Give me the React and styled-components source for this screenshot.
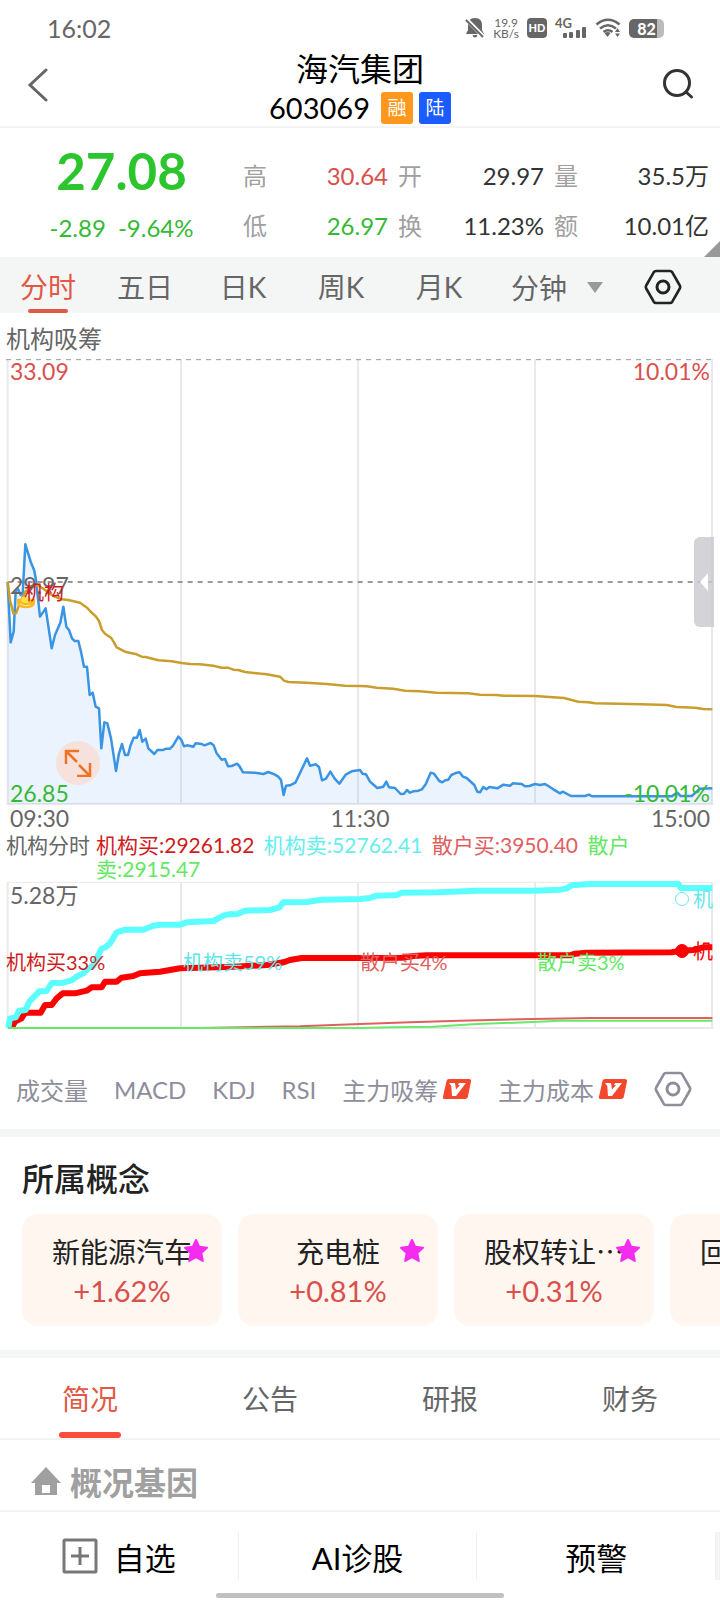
import React, { useState } from "react";
import styled, { createGlobalStyle } from "styled-components";

const stats = [
  { label: "高", value: "30.64", color: "#d9504c" },
  { label: "开", value: "29.97" },
  { label: "量", value: "35.5万" },
  { label: "低", value: "26.97", color: "#36b936" },
  { label: "换", value: "11.23%" },
  { label: "额", value: "10.01亿" },
];

const periods = ["分时", "五日", "日K", "周K", "月K"];

const indicators = [
  { name: "成交量" },
  { name: "MACD" },
  { name: "KDJ" },
  { name: "RSI" },
  { name: "主力吸筹", vip: true },
  { name: "主力成本", vip: true },
];

const concepts = [
  { name: "新能源汽车", change: "+1.62%" },
  { name: "充电桩", change: "+0.81%" },
  { name: "股权转让⋯", change: "+0.31%" },
  { name: "回购增持⋯" },
];

const infoTabs = ["简况", "公告", "研报", "财务"];

// chart series, three units per pixel
const price =
  "23,675 32,856 41,824 47,704 53,694 62,714 68,711 76,562 92,614 103,641 108,669 120,779 137,754 155,874 165,834 181,797 190,749 199,809 207,819 216,844 224,852 235,852 243,884 252,929 261,929 269,1014 278,1007 287,1049 297,1054 304,1174 313,1096 322,1099 333,1144 348,1242 357,1189 366,1161 375,1194 384,1194 392,1164 401,1142 411,1142 419,1119 427,1154 437,1145 445,1174 463,1191 472,1179 490,1179 498,1175 510,1175 519,1166 535,1139 543,1147 552,1168 561,1165 580,1169 587,1159 605,1161 613,1165 632,1158 641,1165 650,1189 665,1208 675,1206 684,1228 695,1227 711,1220 718,1227 729,1246 765,1247 790,1251 805,1245 825,1253 835,1259 843,1269 851,1314 858,1286 870,1285 886,1277 921,1204 930,1226 947,1222 957,1230 966,1270 978,1265 991,1244 1004,1265 1018,1280 1037,1253 1055,1243 1080,1239 1088,1250 1098,1252 1110,1274 1132,1293 1150,1289 1159,1274 1167,1291 1185,1293 1202,1311 1212,1310 1221,1299 1229,1307 1240,1303 1255,1301 1266,1297 1277,1282 1292,1247 1302,1250 1318,1272 1327,1276 1336,1270 1345,1268 1354,1254 1370,1247 1379,1246 1389,1259 1400,1263 1423,1284 1432,1304 1440,1306 1450,1290 1459,1297 1468,1290 1492,1294 1510,1283 1530,1286 1539,1279 1565,1281 1575,1288 1588,1287 1605,1281 1620,1284 1635,1281 1645,1287 1660,1297 1680,1309 1688,1304 1713,1317 1755,1317 1767,1313 1777,1318 2015,1318 2032,1307 2042,1317 2075,1317 2100,1295 2137,1294";
const average =
  "23,675 30,729 40,769 48,769 60,737 76,704 95,689 115,685 135,699 160,717 185,727 205,729 240,737 262,753 270,762 288,779 297,792 306,819 315,830 333,842 342,856 350,871 375,884 410,892 425,899 437,900 475,910 515,913 545,918 570,921 600,922 640,926 665,932 683,932 700,938 715,939 735,945 800,952 840,959 852,971 865,975 920,977 980,981 1035,986 1080,987 1100,988 1130,992 1180,995 1215,1001 1260,1003 1310,1007 1405,1009 1440,1013 1490,1014 1510,1016 1605,1017 1660,1021 1692,1023 1735,1034 1765,1036 1785,1039 1925,1042 2000,1044 2030,1050 2085,1052 2110,1056 2137,1057";
const bigSell =
  "25,441 30,412 47,409 57,389 77,387 88,362 118,331 140,330 155,306 190,305 215,298 230,287 250,277 265,262 280,254 295,222 305,203 315,199 330,187 350,154 375,146 430,146 460,134 480,131 540,131 560,124 640,120 670,104 685,100 710,100 735,89 810,87 838,79 850,64 920,63 965,56 1080,54 1110,51 1130,44 1190,42 1205,35 1315,34 1430,29 1600,29 1680,26 1700,22 1715,13 1770,9 2035,9 2042,21 2137,21";
const bigBuy =
  "35,441 45,422 65,412 75,395 122,395 135,372 155,372 170,352 188,337 225,337 260,329 275,319 305,319 315,302 350,302 365,290 400,285 420,277 480,272 540,262 600,260 700,257 800,252 850,244 870,237 905,231 1080,231 1210,230 1240,225 1280,223 1710,223 1725,218 1760,215 2015,214 2045,209 2080,207 2110,199 2137,199";
const smallBuy =
  "25,441 600,441 900,436 1080,429 1230,424 1380,419 1600,414 1770,411 2137,411";
const smallSell =
  "25,441 1080,441 1180,439 1300,437 1430,429 1600,423 1680,419 2137,419";

const Hexagon = () => (
  <svg width="38" height="38" viewBox="0 0 38 38" fill="none" stroke="currentColor">
    <path
      d="M12 3h14q1.500 0 2.300 1.300l7.500 13.200q.8 1.500 0 3l-7.500 13.200Q27.500 35 26 35H12q-1.500 0-2.300-1.300L2.200 20.500q-.8-1.500 0-3L9.700 4.300Q10.500 3 12 3z"
      strokeWidth="2.600"
    />
    <circle cx="19" cy="19" r="6" strokeWidth="3" />
  </svg>
);

const VipBadge = () => (
  <svg width="30" height="22" viewBox="0 0 30 22">
    <path d="M7 1h20q2.500 0 2 2.500L25.800 19q-.5 2-2.800 2H2.500Q.3 21 1 18.500L4.500 3Q5 1 7 1z" fill="#f4482c" />
    <path d="M7 5h6l1 6.500L18 7h-2l1-2h7L14 18h-4L9.300 8z" fill="#fff" />
  </svg>
);

const Star = () => (
  <StyledStar width="26" height="25" viewBox="0 0 26 25">
    <path
      d="M13 2l3.200 6.800 7.800 1-5.700 5.200 1.500 8L13 19.200 6.200 23l1.500-8L2 9.800l7.800-1z"
      fill="#f32cf0"
      stroke="#f32cf0"
      strokeWidth="2"
      strokeLinejoin="round"
    />
  </StyledStar>
);

const StatusBar = () => (
  <StyledStatus>
    <span>16:02</span>
    <StyledStatusIcons>
      <svg width="20" height="22" viewBox="0 0 20 22">
        <path d="M10 1c5 0 7 3 7 7v5l2 4H1l2-4V8c0-4 2-7 7-7zM7.500 18h5q-.5 2.500-2.500 2.500T7.500 18z" fill="#666" />
        <path d="M0 1l19 19" stroke="#fff" strokeWidth="4" />
        <path d="M1 3l17 17" stroke="#666" strokeWidth="2" />
      </svg>
      <StyledSpeed>
        <span>19.9</span>
        <span>KB/s</span>
      </StyledSpeed>
      <StyledHd>HD</StyledHd>
      <StyledSignal>
        <b>4G</b>
        <svg width="25" height="13" viewBox="0 0 25 13" fill="#666">
          <rect x="1" y="7" width="4" height="5" rx="1" />
          <rect x="7" y="6" width="4" height="6" rx="1" />
          <rect x="14" y="4" width="4" height="8" rx="1" />
          <rect x="20" y="1" width="4" height="11" rx="1" />
        </svg>
      </StyledSignal>
      <svg width="26" height="22" viewBox="0 0 26 22" fill="none" stroke="#666" strokeWidth="2.600">
        <path d="M1.500 7.500q11.500-9.500 23 0M5 11.500q8-6.500 16 0" />
        <path d="M8.500 15q4.500-3.500 9 0" />
        <path d="M9.500 16q3.500-2 6 0L12.500 20z" fill="#666" stroke="none" />
        <path d="M22.500 11l2.500 4h-5zM22.500 20l2.500-3.500h-5z" fill="#666" stroke="none" />
      </svg>
      <StyledBattery>82</StyledBattery>
    </StyledStatusIcons>
  </StyledStatus>
);

const Header = () => (
  <StyledHeader>
    <StyledIconButton aria-label="返回">
      <svg width="24" height="34" viewBox="0 0 24 34" fill="none" stroke="#666" strokeWidth="3">
        <path d="M20 2L4 17l16 15" strokeLinecap="round" />
      </svg>
    </StyledIconButton>
    <div>
      <StyledName>海汽集团</StyledName>
      <StyledCode>
        603069
        <StyledTags>
          <StyledTag $color="#ff971c">融</StyledTag>
          <StyledTag $color="#1a5cff">陆</StyledTag>
        </StyledTags>
      </StyledCode>
    </div>
    <StyledIconButton aria-label="搜索" $end>
      <svg width="32" height="32" viewBox="0 0 32 32" fill="none" stroke="#333" strokeWidth="3">
        <circle cx="15" cy="15" r="12.500" />
        <path d="M24 24l5.500 5" strokeLinecap="round" />
      </svg>
    </StyledIconButton>
  </StyledHeader>
);

const Quote = () => (
  <StyledQuote>
    <StyledPriceBlock>
      <StyledPrice>27.08</StyledPrice>
      <StyledChange>
        <span>-2.89</span>
        <span>-9.64%</span>
      </StyledChange>
    </StyledPriceBlock>
    <StyledStats>
      {stats.map((s) => (
        <StyledStat key={s.label} $color={s.color}>
          <dt>{s.label}</dt>
          <dd>{s.value}</dd>
        </StyledStat>
      ))}
    </StyledStats>
    <StyledCorner />
  </StyledQuote>
);

const Grid = ({ bottom }) => (
  <g stroke="#e9e9ec" strokeWidth="2">
    {[23, 543, 1074, 1605, 2136].map((x) => (
      <path key={x} d={`M${x} 6V${bottom}`} vectorEffect="non-scaling-stroke" />
    ))}
    <path d={`M20 ${bottom}H2140`} vectorEffect="non-scaling-stroke" />
  </g>
);

const Line = ({ points, color, width }) => (
  <polyline
    points={points}
    fill="none"
    stroke={color}
    strokeWidth={width}
    strokeLinejoin="round"
    vectorEffect="non-scaling-stroke"
  />
);

const PriceChart = () => (
  <StyledChart $height={450}>
    <svg viewBox="0 0 2160 1350" preserveAspectRatio="none">
      <Grid bottom={1341} />
      <polygon points={`23,1341 ${price} 2137,1341`} fill="rgba(60,140,250,0.1)" />
      <path d="M18 8H2137" stroke="#999" strokeDasharray="5 5" vectorEffect="non-scaling-stroke" />
      <path d="M23 675H2137" stroke="#999" strokeWidth="2" strokeDasharray="5 5" vectorEffect="non-scaling-stroke" />
      <Line points={price} color="#3994e3" width={2.5} />
      <Line points={average} color="#c99e2d" width={2.5} />
    </svg>
    <StyledAxisLabel $color="#d9504c" $top="2px">33.09</StyledAxisLabel>
    <StyledAxisLabel $color="#d9504c" $top="2px" $right>10.01%</StyledAxisLabel>
    <StyledAxisLabel $color="#666" $top="calc(50% - 9px)">29.97</StyledAxisLabel>
    <StyledAxisLabel $color="#36b936" $top="calc(100% - 26px)">26.85</StyledAxisLabel>
    <StyledAxisLabel $color="#36b936" $top="calc(100% - 26px)" $right>-10.01%</StyledAxisLabel>
    <StyledMark>
      <svg width="20" height="14" viewBox="0 0 20 14">
        <path d="M1 4q1-1 3 0 6 3 12 0 2-1 3 0 1 7-4 8.500-5 1.500-10 0Q0 11 1 4z" fill="#f9b91f" />
        <ellipse cx="10" cy="4.500" rx="5" ry="3.500" fill="#ffe04a" />
        <path d="M4 9q5 3 10 1" stroke="#ffe98a" fill="none" />
      </svg>
      <span>机构</span>
    </StyledMark>
    <StyledExpand aria-label="全屏">
      <svg width="28" height="28" viewBox="0 0 28 28" fill="none" stroke="#ee7326" strokeWidth="2.500">
        <path d="M2 15V2h13M2 2l11 11M15 16l11 11M26 14v13H13" />
      </svg>
    </StyledExpand>
    <StyledHandle aria-label="展开">
      <svg width="10" height="18" viewBox="0 0 10 18">
        <path d="M9 0v18L1 9z" fill="#fff" />
      </svg>
    </StyledHandle>
  </StyledChart>
);

const FlowChart = () => (
  <StyledChart $height={149}>
    <svg viewBox="0 0 2160 447" preserveAspectRatio="none">
      <path d="M20 4H2140" stroke="#e9e9ec" vectorEffect="non-scaling-stroke" />
      <Grid bottom={441} />
      <Line points={bigBuy} color="#fb0202" width={6} />
      <Line points={bigSell} color="#5cffff" width={6} />
      <Line points={smallBuy} color="#e06060" width={2} />
      <Line points={smallSell} color="#6ae86a" width={2} />
    </svg>
    <StyledAxisLabel $color="#666" $top="2px">5.28万</StyledAxisLabel>
    <StyledShares>
      <StyledSeries $color="#d01c1c">机构买33%</StyledSeries>
      <StyledSeries $color="#5ce6e6">机构卖59%</StyledSeries>
      <StyledSeries $color="#e06060">散户买4%</StyledSeries>
      <StyledSeries $color="#62e862">散户卖3%</StyledSeries>
    </StyledShares>
    <StyledEndMark $color="#66e8ee" $top="6px">
      <i />机
    </StyledEndMark>
    <StyledEndMark $color="#fb0202" $top="58px" $filled>
      <i />机
    </StyledEndMark>
  </StyledChart>
);

const App = () => {
  const [period, setPeriod] = useState("分时");
  const [info, setInfo] = useState("简况");

  return (
    <StyledPage>
      <GlobalStyle />
      <StatusBar />
      <Header />
      <Quote />
      <StyledPeriods>
        {periods.map((p) => (
          <StyledPeriod key={p} $active={p === period} onClick={() => setPeriod(p)}>
            {p}
          </StyledPeriod>
        ))}
        <StyledMinutes>
          分钟
          <svg width="16" height="11" viewBox="0 0 16 11">
            <path d="M0 0h16L8 11z" fill="#999" />
          </svg>
        </StyledMinutes>
        <StyledSettings aria-label="设置">
          <Hexagon />
        </StyledSettings>
      </StyledPeriods>
      <StyledChartTitle>机构吸筹</StyledChartTitle>
      <PriceChart />
      <StyledTimes>
        <span>09:30</span>
        <span>11:30</span>
        <span>15:00</span>
      </StyledTimes>
      <StyledLegend>
        <span>机构分时</span>
        <p>
          <StyledLegendItem $color="#d01c1c">机构买:29261.82</StyledLegendItem>{" "}
          <StyledLegendItem $color="#66eeee">机构卖:52762.41</StyledLegendItem>{" "}
          <StyledLegendItem $color="#e06060">散户买:3950.40</StyledLegendItem>{" "}
          <StyledLegendItem $color="#62e862">散户卖:2915.47</StyledLegendItem>
        </p>
      </StyledLegend>
      <FlowChart />
      <StyledIndicators>
        {indicators.map((i) => (
          <StyledIndicator key={i.name}>
            {i.name}
            {i.vip && <VipBadge />}
          </StyledIndicator>
        ))}
        <StyledIndicator aria-label="指标设置">
          <Hexagon />
        </StyledIndicator>
      </StyledIndicators>
      <StyledConcepts>
        <h2>所属概念</h2>
        <StyledCards>
          {concepts.map((c) => (
            <StyledCard key={c.name} href="#">
              <span>{c.name}</span>
              <strong>{c.change}</strong>
              <Star />
            </StyledCard>
          ))}
        </StyledCards>
      </StyledConcepts>
      <StyledInfoTabs>
        {infoTabs.map((t) => (
          <StyledInfoTab key={t} $active={t === info} onClick={() => setInfo(t)}>
            {t}
          </StyledInfoTab>
        ))}
      </StyledInfoTabs>
      <StyledSectionTitle>
        <svg width="30" height="28" viewBox="0 0 30 28">
          <path d="M15 0l15 16h-4v12h-7V18h-8v10H4V16H0z" fill="#a0a0a0" />
          <path d="M11 26h8v2h-8z" fill="#a0a0a0" />
        </svg>
        概况基因
      </StyledSectionTitle>
      <StyledBottomBar>
        <StyledAction>
          <svg width="36" height="36" viewBox="0 0 36 36" fill="none" stroke="#777" strokeWidth="3">
            <rect x="2" y="2" width="32" height="32" rx="1" />
            <path d="M18 9v18M9 18h18" />
          </svg>
          自选
        </StyledAction>
        <StyledAction>AI诊股</StyledAction>
        <StyledAction>预警</StyledAction>
        <StyledMore />
        <StyledHomeBar />
      </StyledBottomBar>
    </StyledPage>
  );
};

export default App;

const GlobalStyle = createGlobalStyle`
  * {
    box-sizing: border-box;
  }
  body {
    margin: 0;
    background: #fff;
    font-family: "Lato", "Noto Sans CJK SC", sans-serif;
    color: #666;
  }
  h1, h2, p, dl, dd {
    margin: 0;
    font-weight: 400;
  }
  button {
    padding: 0;
    border: 0;
    background: none;
    font: inherit;
    color: inherit;
  }
  svg {
    display: block;
    flex-shrink: 0;
  }
`;

const StyledPage = styled.div`
  overflow: hidden;
`;
const StyledStatus = styled.div`
  display: flex;
  justify-content: space-between;
  align-items: center;
  height: 48px;
  padding: 8px 56px 0 47px;
  font-size: 25px;
`;
const StyledStatusIcons = styled.div`
  display: flex;
  align-items: center;
  gap: 8px;
`;
const StyledSpeed = styled.div`
  display: flex;
  flex-flow: column nowrap;
  align-items: center;
  font-size: 12px;
  line-height: 11px;
`;
const StyledHd = styled.span`
  width: 20px;
  border-radius: 4px;
  background: #666;
  color: #fff;
  font-size: 11px;
  font-weight: 900;
  line-height: 20px;
  text-align: center;
`;
const StyledSignal = styled.span`
  display: flex;
  align-items: flex-end;
  height: 22px;
  font-size: 13px;
  b {
    align-self: flex-start;
    margin-right: -10px;
    line-height: 12px;
  }
`;
const StyledBattery = styled.span`
  width: 35px;
  border-radius: 5px;
  background: linear-gradient(to right, #666 80%, #bbb 80%);
  color: #fff;
  font-size: 16px;
  font-weight: 900;
  line-height: 19px;
  text-align: center;
`;
const StyledHeader = styled.header`
  display: grid;
  grid-template-columns: 1fr auto 1fr;
  height: 80px;
  padding: 0 26px;
  border-bottom: 2px solid #f4f4f4;
  color: #000;
  text-align: center;
`;
const StyledIconButton = styled.button`
  display: flex;
  padding-top: 20px;
  justify-self: ${(props) => (props.$end ? "end" : "start")};
`;
const StyledName = styled.h1`
  padding-top: 1px;
  font-size: 32px;
  line-height: 40px;
`;
const StyledCode = styled.div`
  display: flex;
  align-items: center;
  gap: 11px;
  font-size: 29px;
  line-height: 38px;
`;
const StyledTags = styled.span`
  display: flex;
  gap: 6px;
`;
const StyledTag = styled.span`
  width: 32px;
  border-radius: 3px;
  background: ${(props) => props.$color};
  color: #fff;
  font-size: 19px;
  line-height: 32px;
  text-align: center;
`;
const StyledQuote = styled.section`
  position: relative;
  display: flex;
  height: 129px;
`;
const StyledPriceBlock = styled.div`
  flex: 1;
  padding-top: 13px;
  text-align: center;
`;
const StyledPrice = styled.div`
  color: #2dc52d;
  font-size: 51px;
  font-weight: 700;
  line-height: 60px;
`;
const StyledChange = styled.div`
  display: flex;
  justify-content: center;
  gap: 12px;
  color: #36b936;
  font-size: 24px;
  line-height: 54px;
`;
const StyledStats = styled.dl`
  display: grid;
  grid-template-columns: 145px 146px 155px;
  grid-auto-rows: 50px;
  column-gap: 10px;
  padding: 23px 11px 0 0;
`;
const StyledStat = styled.div`
  display: flex;
  justify-content: space-between;
  font-size: 24px;
  line-height: 50px;
  dt {
    color: #a0a0a0;
  }
  dd {
    color: ${(props) => props.$color || "#333"};
  }
`;
const StyledCorner = styled.i`
  position: absolute;
  right: 0;
  bottom: 0;
  border-left: 16px solid transparent;
  border-bottom: 16px solid #999;
`;
const StyledPeriods = styled.nav`
  display: grid;
  grid-template-columns: 96fr repeat(4, 98fr) 138fr 94fr;
  height: 56px;
  background: #f4f6f6;
  font-size: 28px;
`;
const StyledPeriod = styled.button`
  display: flex;
  flex-flow: column nowrap;
  align-items: center;
  padding-top: 8px;
  line-height: 44px;
  color: ${(props) => (props.$active ? "#e25845" : "#666")};
  &::after {
    content: "";
    width: 40px;
    height: 4px;
    border-radius: 2px;
    background: ${(props) => (props.$active ? "#e25845" : "transparent")};
  }
`;
const StyledMinutes = styled.button`
  display: flex;
  justify-content: center;
  align-items: center;
  gap: 20px;
  padding-top: 4px;
`;
const StyledSettings = styled.button`
  display: flex;
  justify-content: center;
  align-items: center;
  padding: 4px 20px 0 0;
  color: #222;
`;
const StyledChartTitle = styled.div`
  padding: 8px 6px 0;
  font-size: 24px;
  line-height: 36px;
`;
const StyledChart = styled.div`
  position: relative;
  height: ${(props) => props.$height}px;
  > svg {
    width: 100%;
    height: 100%;
  }
`;
const StyledAxisLabel = styled.span`
  position: absolute;
  top: ${(props) => props.$top};
  ${(props) => (props.$right ? "right: 10px;" : "left: 10px;")}
  color: ${(props) => props.$color};
  font-size: 23px;
  line-height: 24px;
`;
const StyledMark = styled.span`
  position: absolute;
  top: 50%;
  left: 16px;
  color: #d01c1c;
  font-size: 20px;
  line-height: 20px;
  svg {
    position: absolute;
    top: 13px;
    left: 0;
  }
  span {
    position: relative;
    left: 8px;
  }
`;
const StyledExpand = styled.button`
  position: absolute;
  bottom: 22px;
  left: 56px;
  display: grid;
  place-items: center;
  width: 44px;
  height: 44px;
  border-radius: 50%;
  background: #f7e1dd;
`;
const StyledHandle = styled.button`
  position: absolute;
  top: 180px;
  right: 6px;
  display: grid;
  place-items: center;
  width: 20px;
  height: 90px;
  border-radius: 6px 0 0 6px;
  background: rgba(200, 200, 206, 0.8);
`;
const StyledTimes = styled.div`
  display: flex;
  justify-content: space-between;
  padding: 0 10px;
  font-size: 23px;
  line-height: 22px;
`;
const StyledLegend = styled.div`
  display: flex;
  gap: 6px;
  margin-top: 4px;
  padding: 0 70px 0 6px;
  font-size: 21px;
  line-height: 24px;
  > span {
    flex-shrink: 0;
  }
`;
const StyledSeries = styled.span`
  color: ${(props) => props.$color};
`;
const StyledLegendItem = styled(StyledSeries)`
  margin-right: 4px;
`;
const StyledShares = styled.div`
  position: absolute;
  top: 69px;
  left: 6px;
  right: 6px;
  display: grid;
  grid-template-columns: repeat(4, 1fr);
  font-size: 20px;
  line-height: 24px;
`;
const StyledEndMark = styled.span`
  position: absolute;
  top: ${(props) => props.$top};
  right: 7px;
  display: flex;
  align-items: center;
  gap: 4px;
  color: ${(props) => props.$color};
  font-size: 20px;
  line-height: 24px;
  i {
    width: 14px;
    height: 14px;
    border: 1px solid;
    border-radius: 50%;
    background: ${(props) => (props.$filled ? props.$color : "none")};
  }
`;
const StyledIndicators = styled.div`
  display: flex;
  justify-content: space-between;
  align-items: center;
  margin-top: 19px;
  padding: 0 28px 0 16px;
  height: 80px;
  color: #8e8e9a;
  font-size: 24px;
`;
const StyledIndicator = styled.button`
  display: flex;
  align-items: center;
  gap: 4px;
`;
const StyledConcepts = styled.section`
  padding: 20px 0 24px 22px;
  border-top: 8px solid #f4f6f6;
  border-bottom: 8px solid #f4f6f6;
  h2 {
    color: #222;
    font-size: 32px;
    font-weight: 500;
    line-height: 44px;
  }
`;
const StyledCards = styled.div`
  display: flex;
  gap: 16px;
  margin-top: 13px;
  overflow: hidden;
`;
const StyledCard = styled.a`
  position: relative;
  display: flex;
  flex: 0 0 200px;
  flex-flow: column nowrap;
  align-items: center;
  height: 112px;
  padding-top: 18px;
  border-radius: 16px;
  background: #fff6f0;
  color: #222;
  font-size: 28px;
  line-height: 40px;
  text-decoration: none;
  strong {
    color: #d9504c;
    font-size: 29px;
    font-weight: 400;
    line-height: 38px;
  }
`;
const StyledStar = styled.svg`
  position: absolute;
  top: 24px;
  right: 13px;
`;
const StyledInfoTabs = styled.nav`
  display: grid;
  grid-template-columns: repeat(4, 1fr);
  border-bottom: 2px solid #f4f4f4;
  font-size: 28px;
`;
const StyledInfoTab = styled.button`
  display: flex;
  flex-flow: column nowrap;
  align-items: center;
  padding-top: 8px;
  line-height: 66px;
  color: ${(props) => (props.$active ? "#e25845" : "#666")};
  &::after {
    content: "";
    width: 62px;
    height: 6px;
    border-radius: 3px;
    background: ${(props) => (props.$active ? "#fc4c3c" : "transparent")};
  }
`;
const StyledSectionTitle = styled.h2`
  display: flex;
  align-items: center;
  gap: 9px;
  height: 70px;
  padding: 12px 31px 0;
  color: #a0a0a0;
  font-size: 32px;
  && {
    font-weight: 700;
  }
`;
const StyledBottomBar = styled.footer`
  position: relative;
  display: grid;
  grid-template-columns: 1fr 1fr 1fr 4px;
  align-items: center;
  height: 90px;
  border-top: 2px solid #f4f4f4;
  color: #000;
  font-size: 31px;
`;
const StyledAction = styled.button`
  display: flex;
  justify-content: center;
  align-items: center;
  gap: 16px;
  height: 48px;
  border-right: 1px solid #f0f0f0;
`;
const StyledMore = styled.span`
  height: 48px;
  background: #f4f4f4;
`;
const StyledHomeBar = styled.i`
  position: absolute;
  bottom: 2px;
  left: 30%;
  width: 40%;
  height: 5px;
  border-radius: 3px;
  background: #c0c0c0;
`;
